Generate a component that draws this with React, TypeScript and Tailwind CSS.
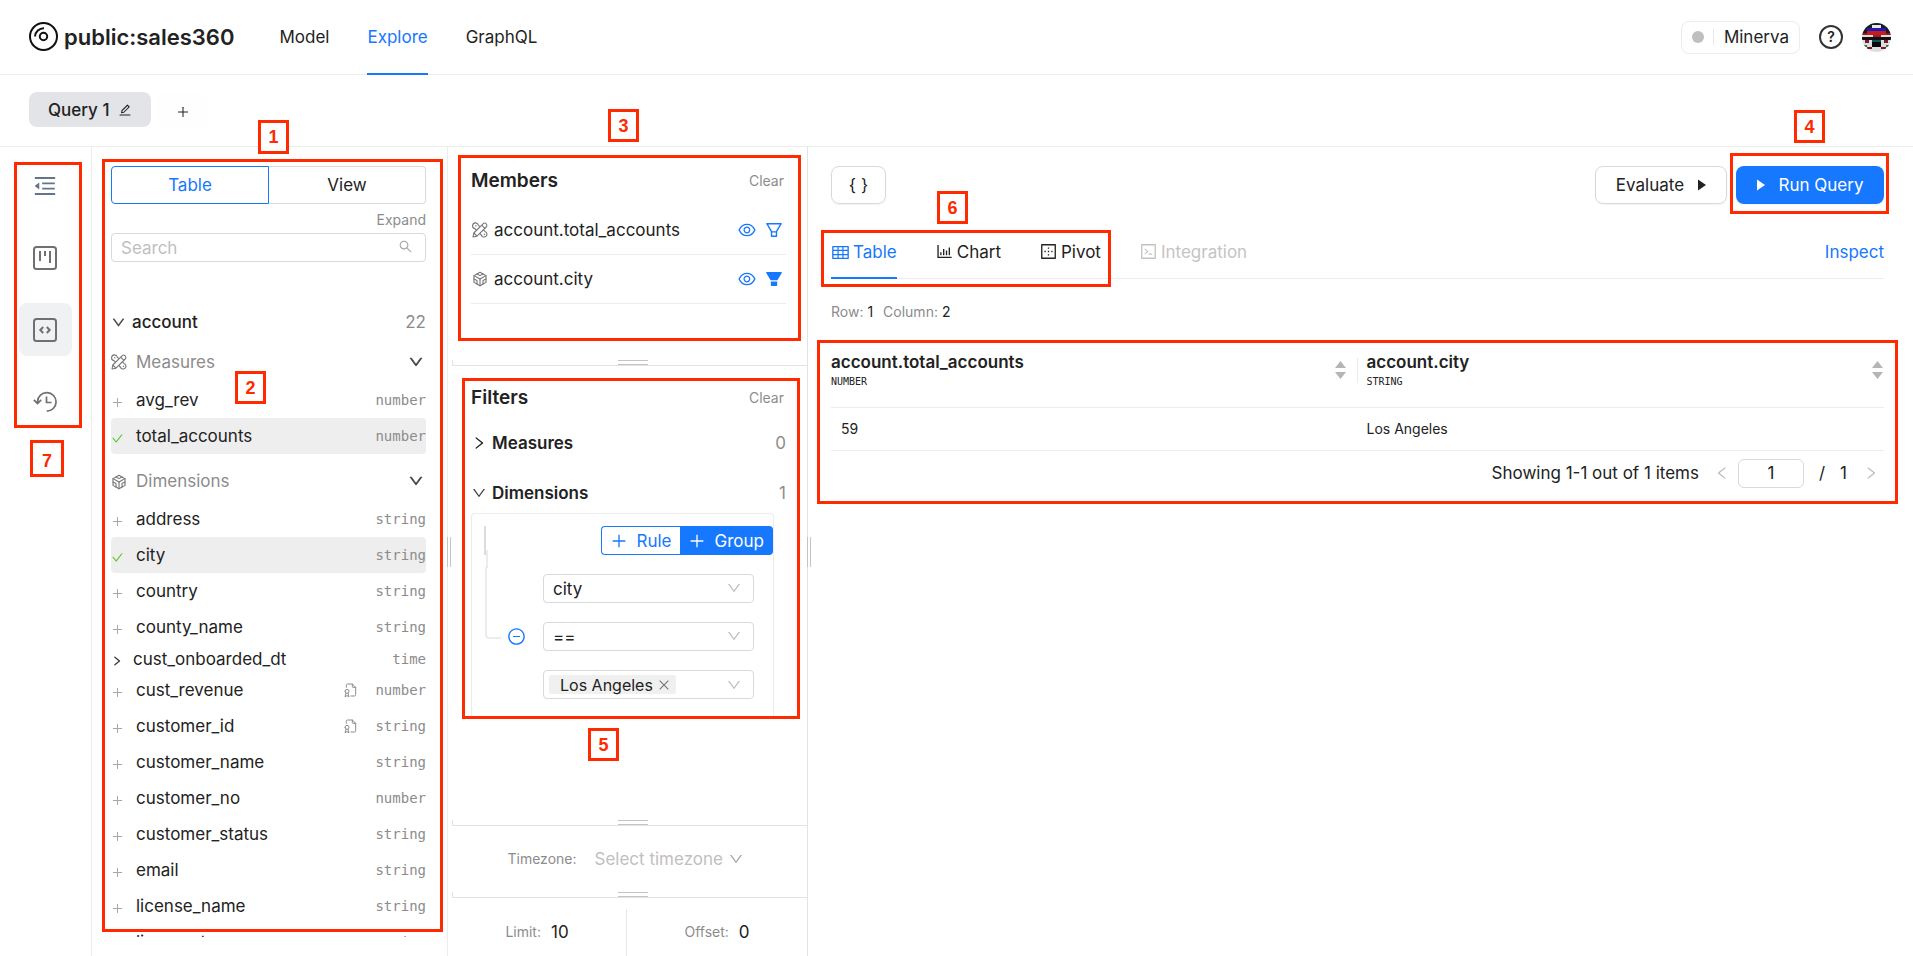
import { useState } from 'react';
import type { ReactNode } from 'react';
import {
  AiFillFilter,
  AiOutlineBarChart,
  AiOutlineBorderOuter,
  AiOutlineCheck,
  AiOutlineClose,
  AiOutlineCode,
  AiOutlineDown,
  AiOutlineEdit,
  AiOutlineEye,
  AiOutlineFilter,
  AiOutlineLeft,
  AiOutlineMenuFold,
  AiOutlineMinusCircle,
  AiOutlinePlus,
  AiOutlineRight,
  AiOutlineSearch,
  AiOutlineTable,
} from 'react-icons/ai';
import { TbBrandCodesandbox, TbFileCertificate } from 'react-icons/tb';
import clsx from 'clsx';

interface Member {
  name: string;
  type: string;
  selected?: boolean;
  primary?: boolean;
  expandable?: boolean;
}

const measures: Member[] = [
  { name: 'avg_rev', type: 'number' },
  { name: 'total_accounts', type: 'number', selected: true },
];

const dimensions: Member[] = [
  { name: 'address', type: 'string' },
  { name: 'city', type: 'string', selected: true },
  { name: 'country', type: 'string' },
  { name: 'county_name', type: 'string' },
  { name: 'cust_onboarded_dt', type: 'time', expandable: true },
  { name: 'cust_revenue', type: 'number', primary: true },
  { name: 'customer_id', type: 'string', primary: true },
  { name: 'customer_name', type: 'string' },
  { name: 'customer_no', type: 'number' },
  { name: 'customer_status', type: 'string' },
  { name: 'email', type: 'string' },
  { name: 'license_name', type: 'string' },
  { name: 'license_type', type: 'string' },
];

function Logo() {
  return (
    <svg className="w-[30px] h-[30px]" viewBox="0 0 30 30" fill="none" stroke="#111" strokeWidth={2}>
      <circle cx="14.5" cy="14.5" r="13.5" />
      <circle cx="14.5" cy="14.5" r="3.7" />
      <path d="M6 14.500A8.800 8.800 0 0 1 15 6.200" />
    </svg>
  );
}

function MeasureIcon() {
  return (
    <svg className="w-4 h-4" viewBox="0 0 16 16" fill="none" stroke="currentColor" strokeWidth={1.100} strokeLinejoin="round">
      <path d="M6.300 3.100a2.900 2.900 0 1 0-3.400 3.500L9.300 13a2.900 2.900 0 1 0 3.700-3.600z" />
      <path d="M3.400 3.400l1 1M11.900 11.900l1 1" />
      <path d="M1 15l.8-4L11 1.800a2.200 2.200 0 0 1 3.200 3.200L5 14.200z" fill="#fff" />
      <path d="M9.700 3.100l3.200 3.200M1.800 11L5 14.200" />
    </svg>
  );
}

function KanbanIcon() {
  return (
    <svg className="w-6 h-6" viewBox="0 0 24 24" fill="none" stroke="currentColor" strokeWidth={2}>
      <rect x="1" y="1" width="22" height="22" rx="2.500" />
      <path d="M7 5v10M12 5v5M17 5v12" />
    </svg>
  );
}

function CodeBoxIcon() {
  return (
    <svg className="w-6 h-6" viewBox="0 0 24 24" fill="none" stroke="currentColor" strokeWidth={2}>
      <rect x="1" y="1" width="22" height="22" rx="2.500" />
      <path d="M10.200 9L7.300 12l2.900 3M13.800 9l2.900 3-2.900 3" />
    </svg>
  );
}

function HistoryIcon() {
  return (
    <svg className="w-6 h-6" viewBox="0 0 24 24" fill="none" stroke="currentColor" strokeWidth={1.700}>
      <path d="M4.500 13V11.500a9.300 9.300 0 1 1 9.300 9.700M.8 9.800l3.700 3.700 3.700-3.700M13.500 6.500v6h5" />
    </svg>
  );
}

function Avatar() {
  return (
    <svg className="w-[29px] h-[29px] rounded-full" viewBox="0 0 29 29" shapeRendering="crispEdges">
      <rect width="29" height="29" fill="#ddd" />
      <rect width="29" height="5" fill="#162020" />
      <rect x="10" y="2" width="9" height="3" fill="#e8e8e8" />
      <rect x="0" y="5" width="29" height="5" fill="#1a1a1a" />
      <rect x="5" y="5" width="19" height="3" fill="#2218b8" />
      <rect x="5" y="8" width="19" height="4" fill="#c41c1c" />
      <rect x="0" y="10" width="5" height="2" fill="#94162c" />
      <rect x="24" y="10" width="5" height="2" fill="#94162c" />
      <rect x="0" y="14" width="29" height="3" fill="#111" />
      <rect x="11" y="12" width="8" height="2" fill="#a01830" />
      <rect x="10" y="17" width="9" height="2" fill="#0f5560" />
      <rect x="3" y="17" width="4" height="3" fill="#7d1733" />
      <rect x="22" y="17" width="4" height="3" fill="#7d1733" />
      <rect x="10" y="19" width="9" height="5" fill="#080808" />
      <rect x="2" y="22" width="3" height="2" fill="#2c7a2c" />
      <rect x="24" y="22" width="3" height="2" fill="#2c7a2c" />
      <rect x="5" y="24" width="5" height="2" fill="#7d1733" />
      <rect x="19" y="24" width="5" height="2" fill="#7d1733" />
    </svg>
  );
}

function Play() {
  return (
    <svg className="w-2 h-3" viewBox="0 0 8 12" fill="currentColor">
      <path d="M0 0.500L8 6L0 11.500z" />
    </svg>
  );
}

function Sorter() {
  return (
    <button type="button" aria-label="Sort" className="text-[#b5b5b5]">
      <svg className="w-[11px] h-[18px]" viewBox="0 0 11 18" fill="currentColor">
        <path d="M5.500 0L11 7H0zM5.500 18L11 11H0z" />
      </svg>
    </button>
  );
}

function MemberRow({ name, type, selected, primary, expandable }: Member) {
  return (
    <li
      className={clsx(
        'flex items-center shrink-0 rounded',
        expandable ? 'h-[27px]' : 'h-9',
        selected && 'bg-[#eee]',
      )}
    >
      <button type="button" className="flex flex-1 items-center text-left">
        <span className={clsx('shrink-0', expandable ? 'w-[22px]' : 'w-[25px]')}>
          {expandable && <AiOutlineRight className="w-3 h-3 mt-1 stroke-[20]" />}
          {!expandable && selected && <AiOutlineCheck className="w-[13px] h-[13px] mt-1 text-[#52c41a]" />}
          {!expandable && !selected && <AiOutlinePlus className="w-[13px] h-[13px] mt-1 text-[#a6a6a6]" />}
        </span>
        <span>{name}</span>
      </button>
      {primary && <TbFileCertificate className="w-4 h-4 mr-4 text-[#8c8c8c] stroke-[1.5]" />}
      <span className="font-['DejaVu_Sans_Mono',monospace] text-sm text-[#8c8c8c]">{type}</span>
    </li>
  );
}

function SectionHead({ icon, children }: { icon: ReactNode; children: ReactNode }) {
  return (
    <button type="button" className="flex h-10 w-full items-center text-[#8c8c8c]">
      <span className="w-[25px] shrink-0 text-[#777]">{icon}</span>
      <span className="flex-1 text-left">{children}</span>
      <AiOutlineDown className="w-4 h-4 mr-[2px] text-[#444] stroke-[40]" />
    </button>
  );
}

function Splitter() {
  return (
    <div className="shrink-0 h-[6px] ml-1 border-l border-b border-[#e3e3e3] flex justify-center">
      <div className="w-[30px] h-[5px] mr-[-6px] border-y border-[#c4c4c4]" />
    </div>
  );
}

function PickBox({ label, value }: { label: string; value: string }) {
  return (
    <div className="relative">
      <select
        aria-label={label}
        defaultValue={value}
        className="block w-full h-[29px] appearance-none rounded border border-[#d9d9d9] bg-white pl-[9px] pr-8"
      >
        <option>{value}</option>
      </select>
      <AiOutlineDown className="pointer-events-none absolute right-3 top-[6px] w-4 h-4 text-[#bfbfbf]" />
    </div>
  );
}

// Numbered callouts drawn over the workspace
function Frame({ className }: { className: string }) {
  return <div className={clsx('absolute border-3 border-[#ff2a00]', className)} />;
}

function Mark({ n, className }: { n: number; className: string }) {
  return (
    <div
      className={clsx(
        "absolute flex items-center justify-center border-3 border-[#ff2a00] bg-white font-['Liberation_Sans',sans-serif] text-lg font-bold text-[#ff2a00]",
        className,
      )}
    >
      {n}
    </div>
  );
}

function Callouts() {
  return (
    <div className="pointer-events-none absolute inset-0">
      <Frame className="left-[102px] top-[159px] w-[341px] h-[773px]" />
      <Mark n={1} className="left-[258px] top-[120px] w-[31px] h-[34px]" />
      <Mark n={2} className="left-[235px] top-[371px] w-[31px] h-[33px]" />
      <Frame className="left-[458px] top-[155px] w-[343px] h-[186px]" />
      <Mark n={3} className="left-[608px] top-[109px] w-[31px] h-[33px]" />
      <Frame className="left-[1730px] top-[153px] w-[159px] h-[61px]" />
      <Mark n={4} className="left-[1794px] top-[110px] w-[31px] h-[33px]" />
      <Frame className="left-[462px] top-[378px] w-[338px] h-[341px]" />
      <Mark n={5} className="left-[588px] top-[728px] w-[31px] h-[33px]" />
      <Frame className="left-[821px] top-[230px] w-[290px] h-[57px]" />
      <Mark n={6} className="left-[937px] top-[191px] w-[31px] h-[33px]" />
      <Frame className="left-[817px] top-[340px] w-[1081px] h-[164px]" />
      <Frame className="left-[14px] top-[162px] w-[68px] h-[266px]" />
      <Mark n={7} className="left-[30px] top-[440px] w-[34px] h-[37px] pt-1" />
    </div>
  );
}

function Header() {
  return (
    <header className="flex h-[75px] shrink-0 items-center border-b border-[#ececec] pl-[29px] pr-[22px]">
      <Logo />
      <h1 className="ml-[5px] text-[22px] font-semibold">public:sales360</h1>
      <nav className="ml-[45px] flex h-[75px] gap-[38px]">
        <a href="#model" className="flex items-center">Model</a>
        <a href="#explore" className="flex items-center border-y-2 border-t-transparent border-b-[#1677ff] text-[#1677ff]">Explore</a>
        <a href="#graphql" className="flex items-center">GraphQL</a>
      </nav>
      <div className="ml-auto flex items-center">
        <div className="flex h-[33px] items-center rounded-lg border border-[#ececec] px-[10px]">
          <span className="h-3 w-3 rounded-full bg-[#bfbfbf]" />
          <span className="ml-[9px] mr-[10px] h-4 w-px bg-[#e8e8e8]" />
          <span>Minerva</span>
        </div>
        <button type="button" aria-label="Help" className="ml-[19px] mr-[19px] flex h-6 w-6 items-center justify-center rounded-full border-2 border-[#333] text-sm font-semibold">
          ?
        </button>
        <Avatar />
      </div>
    </header>
  );
}

function DataPanel() {
  const [search, setSearch] = useState('');

  return (
    <aside className="flex w-[356px] shrink-0 flex-col border-r border-[#ececec] pl-[19px] pr-[21px] pb-[19px] pt-[19px]">
      <div className="flex h-[38px] shrink-0">
        <button type="button" className="w-[158px] rounded-l border border-[#1677ff] text-[#1677ff]">Table</button>
        <button type="button" className="flex-1 rounded-r border border-l-0 border-[#d9d9d9]">View</button>
      </div>
      <button type="button" className="mt-[6px] mb-[3px] h-5 self-end text-sm text-[#8c8c8c]">Expand</button>
      <div className="relative shrink-0">
        <input
          type="text"
          aria-label="Search"
          placeholder="Search"
          value={search}
          onChange={e => setSearch(e.target.value)}
          className="block h-[29px] w-full rounded border border-[#d9d9d9] px-[9px] placeholder:text-[#bfbfbf]"
        />
        <AiOutlineSearch className="absolute right-[13px] top-[6px] w-[15px] h-[15px] text-[#a6a6a6]" />
      </div>

      <div className="mt-10 min-h-0 flex-1 overflow-hidden">
        <button type="button" className="flex h-10 w-full items-center">
          <AiOutlineDown className="w-[15px] h-[15px] text-[#444] stroke-[20]" />
          <span className="ml-[6px] flex-1 text-left font-medium">account</span>
          <span className="text-[#8c8c8c]">22</span>
        </button>
        <SectionHead icon={<MeasureIcon />}>Measures</SectionHead>
        <ul>
          {measures.map(m => <MemberRow key={m.name} {...m} />)}
        </ul>
        <div className="pt-[7px]">
          <SectionHead icon={<TbBrandCodesandbox className="w-[18px] h-[18px] mt-[2px] -ml-px stroke-[1.5]" />}>
            Dimensions
          </SectionHead>
        </div>
        <ul>
          {dimensions.map(d => <MemberRow key={d.name} {...d} />)}
        </ul>
      </div>
    </aside>
  );
}

function MemberItem({ icon, name, filtered }: { icon: ReactNode; name: string; filtered?: boolean }) {
  return (
    <li className="flex h-[49px] items-center border-b border-[#ececec] pr-[2px]">
      <span className="flex w-[18px] justify-center text-[#777]">{icon}</span>
      <span className="ml-[5px] flex-1">{name}</span>
      <button type="button" aria-label="Toggle visibility" className="mr-[7px] text-[#1677ff]">
        <AiOutlineEye className="w-5 h-5" />
      </button>
      <button type="button" aria-label="Filter" className="text-[#1677ff]">
        {filtered ? <AiFillFilter className="w-5 h-5" /> : <AiOutlineFilter className="w-5 h-5" />}
      </button>
    </li>
  );
}

function Filters() {
  return (
    <section className="h-[454px] shrink-0 pl-[23px] pt-[18px] pr-[21px]">
      <div className="flex items-center justify-between">
        <h2 className="text-[19px] leading-7 font-semibold">Filters</h2>
        <button type="button" className="pr-[2px] text-sm text-[#8c8c8c]">Clear</button>
      </div>
      <button type="button" className="mt-[11px] flex h-10 w-full items-center">
        <AiOutlineRight className="w-4 h-4" />
        <span className="ml-[5px] flex-1 text-left font-semibold">Measures</span>
        <span className="text-[#8c8c8c]">0</span>
      </button>
      <button type="button" className="mt-[10px] flex h-10 w-full items-center">
        <AiOutlineDown className="w-4 h-4 text-[#444]" />
        <span className="ml-[5px] flex-1 text-left font-semibold">Dimensions</span>
        <span className="text-[#8c8c8c]">1</span>
      </button>
      <div className="relative mr-3 h-[203px] rounded-t border border-b-0 border-[#ececec] pl-[71px] pt-3">
        <div className="absolute left-3 top-3 h-[29px] w-[2px] bg-[#dcdcdc]" />
        <div className="absolute left-[14px] top-9 h-[18px] w-[2px] bg-[#ececec]" />
        <div className="absolute left-[13px] top-[53px] h-[72px] w-4 rounded-bl border-b-2 border-l-2 border-[#ececec]" />
        <div className="flex h-[29px] justify-end">
          <button type="button" className="flex items-center rounded-l border border-r-0 border-[#1677ff] px-2 text-[#1677ff]">
            <AiOutlinePlus className="mr-[9px] w-[18px] h-[18px]" />
            Rule
          </button>
          <button type="button" className="flex items-center rounded-r bg-[#1677ff] pl-2 pr-[9px] text-white">
            <AiOutlinePlus className="mr-[9px] w-[18px] h-[18px]" />
            Group
          </button>
        </div>
        <div className="mt-[19px] mr-[19px] flex flex-col gap-[19px]">
          <PickBox label="Field" value="city" />
          <div className="flex items-center">
            <button type="button" aria-label="Remove rule" className="-ml-9 mr-[17px] shrink-0 text-[#1677ff]">
              <AiOutlineMinusCircle className="w-[19px] h-[19px]" />
            </button>
            <div className="flex-1"><PickBox label="Operator" value="==" /></div>
          </div>
          <div className="flex h-[29px] items-center rounded border border-[#d9d9d9] pl-[5px] pr-[11px]">
            <span className="flex h-[19px] items-center rounded-xs bg-[#f0f0f0] pl-[11px] pr-[5px] text-base">
              Los Angeles
              <button type="button" aria-label="Remove Los Angeles" className="ml-1 text-[#777]">
                <AiOutlineClose className="w-[14px] h-[14px]" />
              </button>
            </span>
            <AiOutlineDown className="ml-auto w-4 h-4 text-[#bfbfbf]" />
          </div>
        </div>
      </div>
    </section>
  );
}

function BuilderPanel() {
  return (
    <section className="relative flex w-[360px] shrink-0 flex-col border-r border-[#e3e3e3]">
      <div className="h-[213px] shrink-0 pl-[23px] pr-[21px] pt-5">
        <div className="mb-[11px] flex items-center justify-between">
          <h2 className="text-[19px] leading-7 font-semibold">Members</h2>
          <button type="button" className="pr-[2px] text-sm text-[#8c8c8c]">Clear</button>
        </div>
        <ul>
          <MemberItem icon={<MeasureIcon />} name="account.total_accounts" />
          <MemberItem icon={<TbBrandCodesandbox className="w-[18px] h-[18px] stroke-[1.5]" />} name="account.city" filtered />
        </ul>
      </div>
      <Splitter />
      <Filters />
      <Splitter />
      <div className="flex h-[66px] shrink-0 items-center justify-center pr-1">
        <label htmlFor="timezone" className="text-sm text-[#8c8c8c]">Timezone:</label>
        <select id="timezone" defaultValue="" className="ml-[18px] appearance-none bg-transparent text-[#bfbfbf]">
          <option value="">Select timezone</option>
        </select>
        <AiOutlineDown className="ml-1 w-4 h-4 text-[#a6a6a6]" />
      </div>
      <Splitter />
      <div className="flex flex-1 pt-[11px]">
        <div className="flex w-[179px] items-center justify-center border-r border-[#e8e8e8] pb-[2px]">
          <span className="mr-[10px] text-sm text-[#8c8c8c]">Limit:</span>10
        </div>
        <div className="flex flex-1 items-center justify-center pb-[2px]">
          <span className="mr-[10px] text-sm text-[#8c8c8c]">Offset:</span>0
        </div>
      </div>
      {/* column resize grips */}
      <div className="absolute left-[-1px] top-[390px] h-[30px] w-1 border-x border-[#c4c4c4]" />
      <div className="absolute right-[-4px] top-[390px] h-[30px] w-1 border-x border-[#c4c4c4]" />
    </section>
  );
}

function ResultPanel() {
  return (
    <main className="min-w-0 flex-1 pl-[23px] pr-[29px] pt-[19px]">
      <div className="flex items-center">
        <button type="button" className="h-[38px] w-[55px] rounded-lg border border-[#d9d9d9] shadow-xs">{'{ }'}</button>
        <button type="button" className="ml-auto flex h-[38px] w-[132px] items-center justify-center gap-[14px] rounded-lg border border-[#d9d9d9] shadow-xs">
          Evaluate <Play />
        </button>
        <button type="button" className="ml-[9px] flex h-[38px] w-[148px] items-center justify-center gap-[14px] rounded-lg bg-[#1677ff] text-white shadow-xs">
          <Play /> Run Query
        </button>
      </div>

      <div className="mt-[21px] flex h-[54px] gap-[38px] border-b border-[#ececec]">
        <button type="button" className="-mb-px flex items-center gap-[3px] border-y-2 border-t-transparent border-b-[#1677ff] text-[#1677ff]">
          <AiOutlineTable className="w-[19px] h-[19px]" /> Table
        </button>
        <button type="button" className="flex items-center gap-[3px]">
          <AiOutlineBarChart className="w-[19px] h-[19px]" /> Chart
        </button>
        <button type="button" className="flex items-center gap-[3px]">
          <AiOutlineBorderOuter className="w-[19px] h-[19px]" /> Pivot
        </button>
        <button type="button" disabled className="flex items-center gap-[3px] text-[#c4c4c4]">
          <AiOutlineCode className="w-[19px] h-[19px]" /> Integration
        </button>
        <a href="#inspect" className="ml-auto self-center text-[#1677ff]">Inspect</a>
      </div>

      <p className="mt-[23px] text-sm text-[#8c8c8c]">
        Row: <span className="text-[#222]">1</span>
        <span className="ml-[10px]">Column: <span className="text-[#222]">2</span></span>
      </p>

      <table className="mt-[21px] w-full table-fixed border-collapse text-left">
        <thead>
          <tr className="h-[64px] border-b border-[#ececec]">
            <th className="align-top font-semibold">
              <div className="flex h-[54px] items-center">
                <div className="flex-1">
                  account.total_accounts
                  <div className="font-['DejaVu_Sans_Mono',monospace] text-[10px] font-normal leading-4">NUMBER</div>
                </div>
                <Sorter />
                <span className="ml-[11px] h-[25px] w-px bg-[#ececec]" />
              </div>
            </th>
            <th className="align-top font-semibold">
              <div className="flex h-[54px] items-center pl-[9px] pr-[1px]">
                <div className="flex-1">
                  account.city
                  <div className="font-['DejaVu_Sans_Mono',monospace] text-[10px] font-normal leading-4">STRING</div>
                </div>
                <Sorter />
              </div>
            </th>
          </tr>
        </thead>
        <tbody>
          <tr className="h-[43px] border-b border-[#ececec] text-sm">
            <td className="pl-[10px]">59</td>
            <td className="pl-[9px]">Los Angeles</td>
          </tr>
        </tbody>
      </table>

      <div className="mt-2 flex h-[29px] items-center justify-end pr-[5px]">
        <span>Showing 1-1 out of 1 items</span>
        <button type="button" aria-label="Previous page" className="ml-[15px] mr-2 text-[#bfbfbf]">
          <AiOutlineLeft className="w-4 h-4" />
        </button>
        <input
          type="text"
          aria-label="Page"
          defaultValue="1"
          className="h-[29px] w-[66px] rounded-md border border-[#d9d9d9] text-center"
        />
        <span className="ml-[15px]">/</span>
        <span className="ml-[15px]">1</span>
        <button type="button" aria-label="Next page" className="ml-4 text-[#bfbfbf]">
          <AiOutlineRight className="w-4 h-4" />
        </button>
      </div>
    </main>
  );
}

export default function App() {
  return (
    <div className="relative flex h-screen flex-col overflow-hidden bg-white font-['Inter',sans-serif] text-[17px] leading-6 text-[#222]">
      <Header />

      <div className="flex h-[72px] shrink-0 items-center gap-[7px] border-b border-[#ececec] pl-[29px] pb-[2px]">
        <button type="button" className="flex h-[35px] items-center gap-[9px] rounded-lg bg-[#e2e4e8] pl-[19px] pr-[19px] font-medium">
          Query 1
          <AiOutlineEdit className="w-[14px] h-[14px]" />
        </button>
        <button type="button" aria-label="Add query" className="flex h-[35px] w-[49px] items-center justify-center rounded-lg bg-[#fefefe]">
          <AiOutlinePlus className="w-[14px] h-[14px] mt-1" />
        </button>
      </div>

      <div className="flex min-h-0 flex-1">
        <div className="flex w-[92px] shrink-0 flex-col items-center gap-[19px] border-r border-[#ececec] pt-3 pr-px text-[#707070]">
          <button type="button" aria-label="Collapse" className="flex h-[53px] w-[53px] items-center justify-center rounded-lg text-[#65748b]">
            <AiOutlineMenuFold className="w-[26px] h-[26px]" />
          </button>
          <button type="button" aria-label="Models" className="flex h-[53px] w-[53px] items-center justify-center rounded-lg">
            <KanbanIcon />
          </button>
          <button type="button" aria-label="Code" className="flex h-[53px] w-[53px] items-center justify-center rounded-lg bg-[#f0f1f3]">
            <CodeBoxIcon />
          </button>
          <button type="button" aria-label="History" className="flex h-[53px] w-[53px] items-center justify-center rounded-lg">
            <HistoryIcon />
          </button>
        </div>
        <DataPanel />
        <BuilderPanel />
        <ResultPanel />
      </div>

      <Callouts />
    </div>
  );
}
